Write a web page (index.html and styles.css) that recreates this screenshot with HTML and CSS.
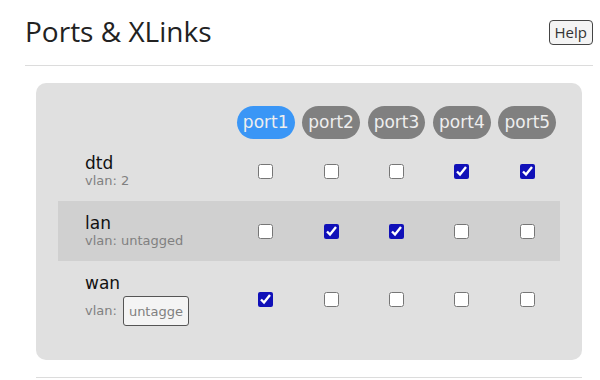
FILE: index.html
```html
<!DOCTYPE html>
<html>
<head>
<meta charset="utf-8">
<link rel="stylesheet" href="styles.css">
</head>
<body>
<div class="page">
  <header class="head">
    <h1 class="title">Ports &amp; XLinks</h1>
    <button class="help">Help</button>
  </header>
  <div class="rule"></div>
  <section class="panel">
    <div class="row header-row">
      <div class="name"></div>
      <div class="cell"><span class="pill active">port1</span></div>
      <div class="cell"><span class="pill">port2</span></div>
      <div class="cell"><span class="pill">port3</span></div>
      <div class="cell"><span class="pill">port4</span></div>
      <div class="cell"><span class="pill">port5</span></div>
    </div>
    <div class="row">
      <div class="name"><div class="label">dtd</div><div class="vlan">vlan: 2</div></div>
      <div class="cell"><input type="checkbox" class="cb"></div>
      <div class="cell"><input type="checkbox" class="cb"></div>
      <div class="cell"><input type="checkbox" class="cb"></div>
      <div class="cell"><input type="checkbox" class="cb" checked></div>
      <div class="cell"><input type="checkbox" class="cb" checked></div>
    </div>
    <div class="row hl">
      <div class="name"><div class="label">lan</div><div class="vlan">vlan: untagged</div></div>
      <div class="cell"><input type="checkbox" class="cb"></div>
      <div class="cell"><input type="checkbox" class="cb" checked></div>
      <div class="cell"><input type="checkbox" class="cb" checked></div>
      <div class="cell"><input type="checkbox" class="cb"></div>
      <div class="cell"><input type="checkbox" class="cb"></div>
    </div>
    <div class="row">
      <div class="name"><div class="label">wan</div><div class="vlan edit">vlan: <input class="vlan-input" type="text" value="untagged"></div></div>
      <div class="cell"><input type="checkbox" class="cb" checked></div>
      <div class="cell"><input type="checkbox" class="cb"></div>
      <div class="cell"><input type="checkbox" class="cb"></div>
      <div class="cell"><input type="checkbox" class="cb"></div>
      <div class="cell"><input type="checkbox" class="cb"></div>
    </div>
  </section>
  <div class="rule bottom"></div>
</div>
</body>
</html>
```
FILE: styles.css
```css
html, body {
  margin: 0;
  padding: 0;
  background: #fff;
}
body {
  font-family: "DejaVu Sans", sans-serif;
  color: #111;
}
.page {
  padding: 0 7px 0 25px;
}
.head {
  display: flex;
  justify-content: space-between;
  align-items: flex-start;
  height: 65px;
}
.title {
  margin: 0;
  padding-top: 12px;
  font-family: "Open Sans", sans-serif;
  font-weight: 400;
  font-size: 28px;
  line-height: 38px;
  color: #222;
}
.help {
  margin-top: 20px;
  height: 25px;
  padding: 0 5px;
  font-family: "Open Sans", sans-serif;
  font-size: 15px;
  line-height: 23px;
  color: #333;
  background: #f4f4f4;
  border: 1px solid #444;
  border-radius: 4px;
}
.rule {
  height: 1px;
  background: #dcdcdc;
}
.panel {
  margin: 17px 11px 0;
  background: #e0e0e0;
  border-radius: 10px;
  padding: 23px 22px 22px;
}
.rule.bottom {
  margin: 17px 11px 0;
}
.row {
  display: grid;
  grid-template-columns: 175px repeat(5, 1fr);
  align-items: center;
  padding: 12px 0;
}
.row.header-row {
  padding: 0 0 2px;
}
.row.hl {
  background: #d0d0d0;
}
.cell {
  display: flex;
  justify-content: center;
  align-items: center;
}
.pill {
  display: inline-block;
  height: 33px;
  line-height: 33px;
  padding: 0 6px;
  border-radius: 17px;
  background: #808080;
  color: #eee;
  font-size: 17px;
}
.pill.active {
  background: #3a96f6;
}
.name {
  padding-left: 27px;
}
.label {
  font-size: 17px;
  line-height: 20px;
  color: #111;
}
.vlan {
  font-size: 13px;
  line-height: 16px;
  color: #808080;
}
.vlan.edit {
  display: flex;
  align-items: center;
  gap: 6px;
  margin-top: 3px;
}
.vlan-input {
  box-sizing: border-box;
  width: 66px;
  height: 30px;
  padding: 0 5px;
  font-family: "DejaVu Sans", sans-serif;
  font-size: 13px;
  color: #808080;
  background: #f4f4f4;
  border: 1px solid #555;
  border-radius: 3px;
}
.cb {
  width: 15px;
  height: 15px;
  margin: 0;
  accent-color: #1010b8;
}
```
